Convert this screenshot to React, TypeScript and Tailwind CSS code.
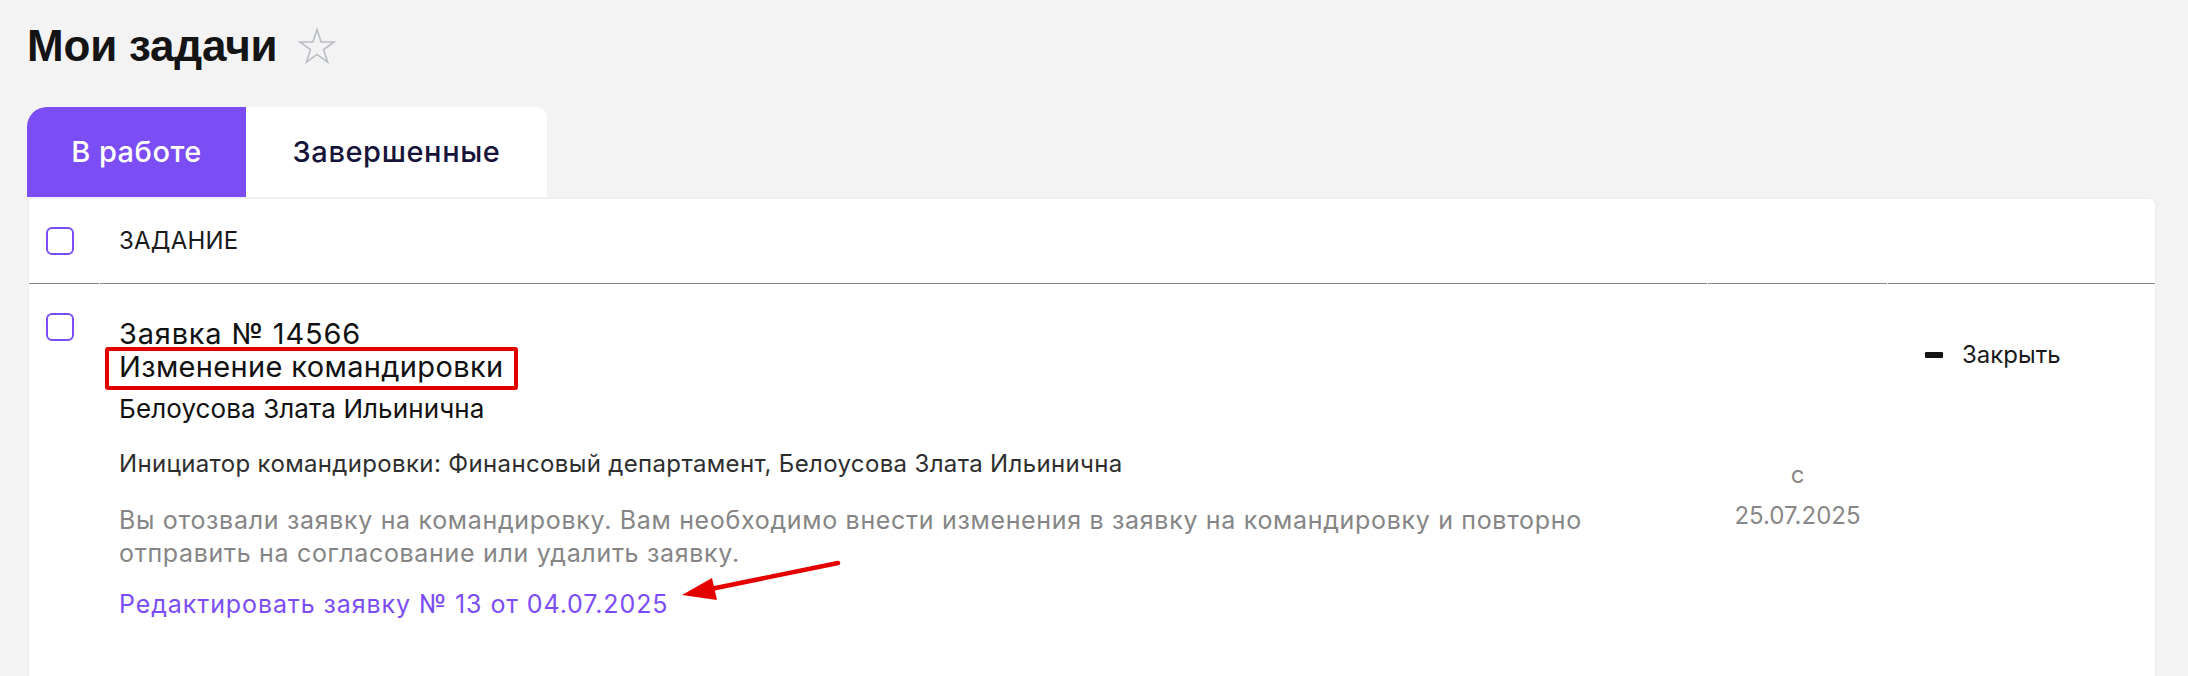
const StarOutline = () => (
  <svg width="36" height="36" viewBox="0 0 36 36" fill="none" className="overflow-visible">
    <polygon
      points="18,1.5 22.06,13.92 35.12,13.94 24.56,21.63 28.58,34.06 18,26.4 7.42,34.06 11.44,21.63 0.88,13.94 13.94,13.92"
      stroke="#b9bdc4"
      strokeWidth="1.6"
      strokeLinejoin="miter"
    />
  </svg>
);

const Checkbox = () => (
  <div className="w-[28px] h-[28px] rounded-[6px] border-2 border-[#7b4df4] bg-white" />
);

const Arrow = () => (
  <svg
    width="170"
    height="50"
    viewBox="0 0 170 50"
    className="absolute left-[676px] top-[555px] pointer-events-none"
  >
    <line x1="162" y1="8" x2="30" y2="35" stroke="#e50000" strokeWidth="4.5" strokeLinecap="round" />
    <polygon points="6,40 36,23 41,45" fill="#e50000" />
  </svg>
);

export default function App() {
  return (
    <div className="relative min-h-[676px] bg-[#f3f3f3] pl-[27px] pr-[31px] pt-5 font-['Inter',sans-serif]">
      <div className="flex items-center gap-[22px]">
        <h1 className="font-['Liberation_Sans',Arial,sans-serif] font-bold text-[44px] leading-[52px] text-[#141414] tracking-[-0.2px]">
          Мои задачи
        </h1>
        <StarOutline />
      </div>

      <div className="mt-[35px] flex">
        <button className="w-[219px] h-[90px] rounded-tl-[20px] bg-[#7b4df4] text-white text-[29px] tracking-[0.5px] font-medium">
          В работе
        </button>
        <button className="w-[301px] h-[90px] rounded-tr-xl bg-white text-[#16143a] text-[29px] tracking-[0.6px] font-medium">
          Завершенные
        </button>
      </div>

      <div className="bg-white border-2 border-[#edf0f4] rounded-tr-lg min-h-[520px]">
        {/* header */}
        <div className="grid grid-cols-[70px_1607px_179px_1fr] gap-x-px">
          <div className="h-[85px] border-b border-[#8a8a8a] flex items-center pl-[17px]">
            <Checkbox />
          </div>
          <div className="h-[85px] border-b border-[#8a8a8a] flex items-center pl-[19px] text-[24px] tracking-[0.2px] text-[#1a1a1a]">
            ЗАДАНИЕ
          </div>
          <div className="h-[85px] border-b border-[#8a8a8a]" />
          <div className="h-[85px] border-b border-[#8a8a8a]" />
        </div>

        {/* row */}
        <div className="grid grid-cols-[70px_1607px_179px_1fr] gap-x-px pb-[77px]">
          <div className="pt-[29px] pl-[17px]">
            <Checkbox />
          </div>
          <div className="pt-[33px] pl-[19px] text-[#111]">
            <p className="text-[29px] leading-[33px] tracking-[0.8px]">Заявка № 14566</p>
            <p className="text-[29px] leading-[33px] tracking-[0.35px]">
              <span className="relative">
                Изменение командировки
                <span className="absolute -top-[2px] -bottom-[6px] -left-[14px] -right-[14px] border-4 border-[#e50000] rounded-[3px]" />
              </span>
            </p>
            <p className="mt-[9px] text-[26px] leading-[33px] tracking-[0.1px]">Белоусова Злата Ильинична</p>
            <p className="mt-[24px] text-[24px] leading-[30px] tracking-[0.35px] text-[#2e2e2e]">
              Инициатор командировки: Финансовый департамент, Белоусова Злата Ильинична
            </p>
            <p className="mt-[25px] max-w-[1490px] text-[25px] leading-[33px] tracking-[0.68px] text-[#858585]">
              Вы отозвали заявку на командировку. Вам необходимо внести изменения в заявку на командировку и повторно
              отправить на согласование или удалить заявку.
            </p>
            <a className="block mt-[18px] text-[25px] leading-[33px] tracking-[0.9px] text-[#7b4df4]" href="#">
              Редактировать заявку № 13 от 04.07.2025
            </a>
          </div>
          <div className="pt-[170px] flex flex-col items-center text-[24px] leading-[41px] text-[#888]">
            <span>с</span>
            <span>25.07.2025</span>
          </div>
          <div className="pt-[56px] pl-[37px]">
            <button className="flex items-center gap-[19px] text-[24px] leading-[30px] text-[#1a1a1a]">
              <span className="w-[18px] h-[6px] rounded-[1px] bg-[#141414]" />
              Закрыть
            </button>
          </div>
        </div>
      </div>

      <Arrow />
    </div>
  );
}
